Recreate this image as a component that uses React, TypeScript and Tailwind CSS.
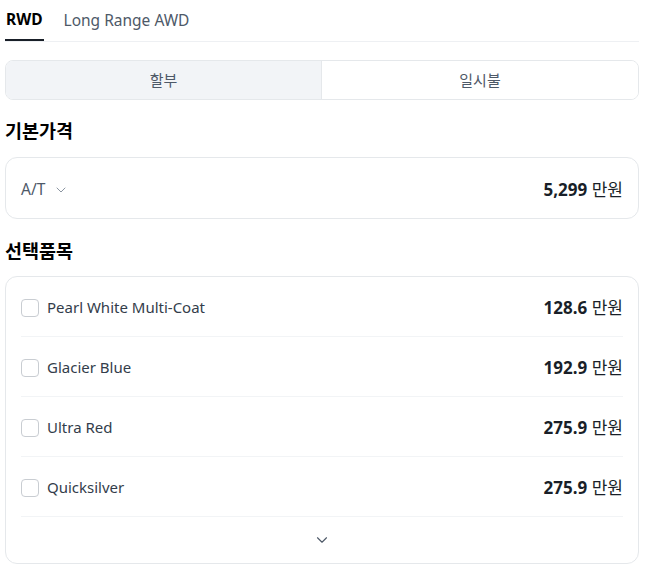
import { ChevronDown } from "lucide-react"

const options = [
  { name: "Pearl White Multi-Coat", price: "128.6" },
  { name: "Glacier Blue", price: "192.9" },
  { name: "Ultra Red", price: "275.9" },
  { name: "Quicksilver", price: "275.9" },
]

export default function App() {
  return (
    <div
      className="ml-[5px] w-[634px] bg-white text-[#191f28]"
      style={{ fontFamily: '"Noto Sans", "Noto Sans CJK KR", sans-serif' }}
    >
      {/* trim tabs */}
      <div className="flex h-[42px] items-stretch gap-5 border-b border-[#eef0f3]">
        <div className="flex items-center border-b-2 border-[#191f28] pl-[1px] pr-[1px] pt-[1px] text-[15.5px] font-bold leading-none text-black">
          RWD
        </div>
        <div className="flex items-center pt-[1px] text-[15.5px] leading-none text-[#4e5968]">Long Range AWD</div>
      </div>

      {/* payment toggle */}
      <div className="mt-[18px] grid h-[40px] grid-cols-2 overflow-hidden rounded-lg border border-[#e5e8eb] text-[15px]">
        <button className="border-r border-[#e5e8eb] bg-[#f2f4f7] text-[#4e5968]">할부</button>
        <button className="bg-white text-[#4e5968]">일시불</button>
      </div>

      {/* base price */}
      <h2 className="mt-[18px] text-[18.5px] font-bold leading-[26px] text-black">기본가격</h2>
      <div className="mt-[13px] flex h-[62px] items-center justify-between rounded-xl border border-[#e5e8eb] px-[15px] pt-[3px]">
        <div className="flex items-center gap-[8px] text-[15.5px] text-[#4e5968]">
          A/T
          <ChevronDown className="h-[16px] w-[16px] text-[#8b95a1]" strokeWidth={1.5} />
        </div>
        <div className="text-[17px]">
          <span className="font-bold">5,299</span> 만원
        </div>
      </div>

      {/* options */}
      <h2 className="mt-[19px] text-[18.5px] font-bold leading-[26px] text-black">선택품목</h2>
      <div className="mt-[12px] rounded-xl border border-[#e5e8eb] px-[15px]">
        {options.map((o) => (
          <div key={o.name} className="flex h-[60px] items-center justify-between border-b border-[#f2f4f6] pt-[2px]">
            <label className="flex items-center gap-[8px] text-[15px] text-[#333d4b]">
              <span className="h-[18px] w-[18px] rounded-[4px] border border-[#c9cdd2] bg-white" />
              {o.name}
            </label>
            <div className="text-[17px]">
              <span className="font-bold">{o.price}</span> 만원
            </div>
          </div>
        ))}
        <div className="flex h-[46px] items-center justify-center">
          <ChevronDown className="h-[18px] w-[18px] text-[#4e5968]" strokeWidth={1.5} />
        </div>
      </div>
    </div>
  )
}
